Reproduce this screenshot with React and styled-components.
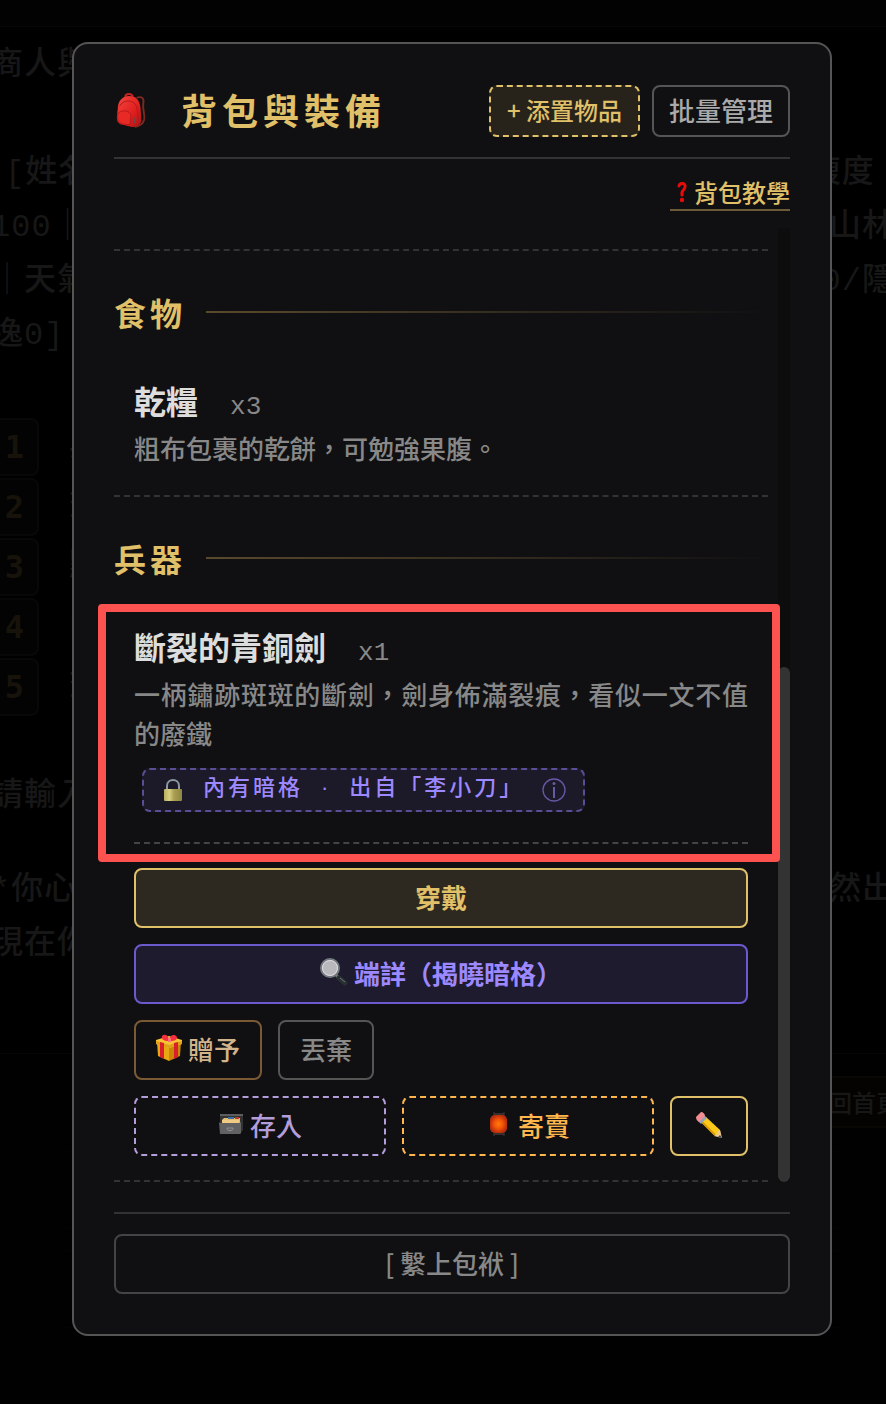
import React from 'react';
import styled, { createGlobalStyle, css } from 'styled-components';

const gold = '#e0c068';
const sans = '"Noto Sans CJK TC", sans-serif';
const mono = '"Liberation Mono", "Noto Sans CJK TC", monospace';

const GlobalStyle = createGlobalStyle`
	* {
		box-sizing: border-box;
	}
	body {
		margin: 0;
		background: #000;
		color: #888;
		font-family: ${sans};
		font-weight: 500;
	}
	h1, h2, h3, p, ul, ol {
		margin: 0;
		padding: 0;
		list-style: none;
	}
`;

// Game screen and modal share one grid cell
const Stage = styled.div`
	display: grid;
	grid-template-columns: minmax(0, 1fr);
	min-height: 100vh;
	& > * {
		grid-area: 1 / 1;
	}
`;

/* ---------- dimmed game screen ---------- */

const Game = styled.div`
	display: flex;
	flex-direction: column;
	min-width: 0;
	overflow: hidden;
	color: #171717;
	font-family: ${mono};
	font-size: 32px;
	letter-spacing: 1px;
	line-height: 54px;
	white-space: pre;
`;

const GameBar = styled.div`
	flex: none;
	height: 27px;
	background: #020202;
	border-bottom: 1px solid #070707;
`;

const Story = styled.div`
	margin: ${p => p.$top}px -9px 0;
`;

const StoryLine = styled.p`
	display: flex;
	justify-content: space-between;
	padding-left: ${p => (p.$indent ? '14px' : '0')};
`;

const Choices = styled.ol`
	display: flex;
	flex-direction: column;
	gap: 2px;
	margin: 55px 0 0 -8px;
`;

const Choice = styled.li`
	display: flex;
	align-items: center;
	gap: 30px;
	height: 58px;
`;

const ChoiceKey = styled.span`
	width: 47px;
	height: 58px;
	padding-right: 12px;
	border: 2px solid #080808;
	border-radius: 8px;
	background: #030303;
	color: #17130a;
	font-family: "DejaVu Sans Mono", monospace;
	font-weight: 700;
	text-align: right;
`;

const GameFooter = styled.div`
	display: flex;
	flex-direction: column;
	flex: 1;
	margin-top: 81px;
	padding-top: 22px;
	border-top: 1px solid #060606;
	background: #010101;
`;

const HomeLabel = styled.span`
	align-self: flex-end;
	margin-right: -20px;
	padding: 0 4px 0 24px;
	border: 2px solid #0a0804;
	background: #040301;
	font-family: ${sans};
	font-size: 24px;
	letter-spacing: 0;
	line-height: 48px;
`;

const GhostPanel = styled.div`
	height: 78px;
	margin: 22px 34px 0 52px;
	border: 1px solid #030303;
	border-radius: 12px;
`;

/* ---------- modal ---------- */

const ModalArea = styled.div`
	position: relative;
	padding: 42px 54px 68px 72px;
`;

const Modal = styled.section`
	padding: 40px;
	border: 2px solid #555;
	border-radius: 16px;
	background: #101012;
`;

const Header = styled.header`
	display: flex;
	align-items: center;
	min-height: 75px;
	padding-bottom: 19px;
	border-bottom: 2px solid #333;
`;

const Title = styled.h1`
	display: flex;
	flex: 1;
	align-items: center;
	gap: 33px;
	color: ${gold};
	font-size: 36px;
	font-weight: 700;
	letter-spacing: 5px;
	line-height: 50px;
	white-space: nowrap;
`;

const TitleText = styled.span`
	padding-bottom: 4px;
`;

const HeaderActions = styled.div`
	display: flex;
	gap: 12px;
`;

const HeaderButton = styled.button`
	height: 52px;
	padding: 0 15px 4px;
	border: 2px solid #555;
	border-radius: 8px;
	background: transparent;
	color: #aaa;
	font-family: ${sans};
	font-size: 26px;
	font-weight: 500;
	white-space: nowrap;
	cursor: pointer;
	${p => p.$add && css`
		padding: 0 16px 4px;
		border: 2px dashed ${gold};
		background: #27231b;
		color: ${gold};
		font-size: 24px;
	`}
`;

const HelpRow = styled.div`
	display: flex;
	justify-content: flex-end;
	padding: 18px 0 17px;
`;

const HelpLink = styled.a`
	display: flex;
	align-items: center;
	padding-bottom: 2px;
	border-bottom: 2px solid #6b5a38;
	color: ${gold};
	font-size: 24px;
	line-height: 30px;
	text-decoration: none;
`;

const ScrollArea = styled.div`
	display: flex;
	gap: 10px;
`;

const List = styled.div`
	flex: 1;
	min-width: 0;
	padding-top: 21px;
`;

const ScrollTrack = styled.div`
	display: flex;
	flex: none;
	align-items: flex-end;
	width: 12px;
	background: #0d0d0d;
`;

const ScrollThumb = styled.div`
	width: 100%;
	height: 54%;
	border-radius: 6px;
	background: #333;
`;

const Divider = styled.hr`
	height: 0;
	margin: 0;
	border: 0;
	border-top: 2px dashed ${p => (p.$inner ? '#444' : '#333')};
`;

const SectionTitle = styled.h2`
	display: flex;
	align-items: center;
	gap: 20px;
	margin: 38px 0 44px;
	color: ${gold};
	font-size: 32px;
	font-weight: 700;
	letter-spacing: 4px;
	line-height: 46px;
	&::after {
		content: '';
		flex: 1;
		height: 2px;
		background: linear-gradient(to right, #5a4a2c, transparent);
	}
`;

const Item = styled.article`
	padding: 0 20px 24px;
`;

const ItemInfo = styled.div`
	position: relative;
`;

// Red frame round the item being pointed out
const Highlight = styled.div`
	position: absolute;
	inset: -21px -32px -18px -36px;
	border: 8px solid #fc5250;
	border-radius: 4px;
	pointer-events: none;
`;

const ItemHead = styled.div`
	display: flex;
	align-items: baseline;
	gap: 32px;
	height: 49px;
	line-height: 42px;
`;

const ItemName = styled.h3`
	color: #ddd;
	font-size: 32px;
	font-weight: 700;
`;

const ItemCount = styled.span`
	color: #888;
	font-family: "Courier New", ${mono};
	font-size: 26px;
	font-weight: 400;
`;

const ItemDesc = styled.p`
	margin-bottom: 4px;
	color: #888;
	font-size: 26px;
	line-height: 39px;
	text-align: justify;
`;

const SecretTag = styled.div`
	display: inline-flex;
	align-items: center;
	gap: 18px;
	height: 44px;
	margin: 12px 0 30px 8px;
	padding: 0 17px;
	border: 2px dashed #5c4e96;
	border-radius: 8px;
	background: #1c1928;
	color: #9c88ff;
	font-size: 22px;
	letter-spacing: 3px;
	line-height: 30px;
	vertical-align: top;
	white-space: nowrap;
`;

const TagText = styled.span`
	padding-bottom: 4px;
	font-family: "Liberation Sans", ${sans};
`;

const Actions = styled.div`
	display: flex;
	flex-direction: column;
	gap: 16px;
	padding-top: 24px;
`;

const ActionRow = styled.div`
	display: flex;
	gap: 16px;
`;

const tones = {
	equip: css`
		border-color: ${gold};
		background: #2d2820;
		color: ${gold};
		font-weight: 700;
	`,
	reveal: css`
		border-color: #6a5acd;
		background: #1e1b2e;
		color: #9c88ff;
		font-weight: 700;
	`,
	gift: css`
		border-color: #7a5a35;
		color: #d2b48c;
	`,
	discard: css`
		border-color: #555;
		color: #888;
	`,
	store: css`
		border: 2px dashed #b39ddb;
		color: #b39ddb;
	`,
	sell: css`
		border: 2px dashed #ffb74d;
		color: #ffb74d;
	`,
	edit: css`
		padding: 0 24px 2px;
		border-color: ${gold};
	`,
	close: css`
		width: 100%;
		border-color: #444;
		color: #888;
	`,
};

const Button = styled.button`
	display: flex;
	align-items: center;
	justify-content: center;
	gap: 6px;
	flex: ${p => (p.$grow ? '1' : 'none')};
	height: 60px;
	padding: 0 20px 4px;
	border: 2px solid;
	border-radius: 8px;
	background: transparent;
	font-family: ${sans};
	font-size: 26px;
	font-weight: 500;
	white-space: nowrap;
	cursor: pointer;
	${p => tones[p.$tone]}
`;

const Footer = styled.footer`
	margin-top: 30px;
	padding-top: 20px;
	border-top: 2px solid #333;
`;

/* ---------- icons ---------- */

const Svg = styled.svg`
	display: block;
	flex: none;
`;

const BackpackIcon = () => (
	<Svg width="34" height="36" viewBox="0 0 36 38" aria-hidden="true">
		<defs>
			<linearGradient id="bag" x1="0" y1="0" x2="1" y2="1">
				<stop offset="0" stopColor="#f5473f" />
				<stop offset=".6" stopColor="#e01f1f" />
				<stop offset="1" stopColor="#a81414" />
			</linearGradient>
		</defs>
		<path d="M24 5c6-2 8 1 7 6 -1 6 2 12 1 17 -1 4-5 7-10 8" fill="none" stroke="#7a2a22" strokeWidth="2" />
		<path d="M12 4c0-4 7-4 8 0" fill="none" stroke="#c92020" strokeWidth="2" />
		<path d="M4 17C4 8 9 3 16 3c8 0 11 5 12 12l1 13c0 5-4 8-10 8L7 33c-3-1-4-4-4-7z" fill="url(#bag)" />
		<path d="M6 14c3-7 14-8 18 0l2 14" fill="none" stroke="#b01818" strokeWidth="1" />
		<path d="M4 22c4-5 13-4 14 2l-1 9c-4 1-9 0-11-2-2-2-3-5-2-9z" fill="#e82a27" stroke="#b51818" strokeWidth="1" />
		<path d="M22 26v6" stroke="#555" strokeWidth="1" />
	</Svg>
);

const QuestionIcon = () => (
	<Svg width="24" height="24" viewBox="0 0 24 24" aria-hidden="true">
		<path d="M9 6c1-4 7-3 6 1 0 3-4 3-3 8" fill="none" stroke="#e80b0b" strokeWidth="3" strokeLinecap="round" />
		<circle cx="12" cy="20" r="2.2" fill="#e80b0b" />
	</Svg>
);

const LockIcon = () => (
	<Svg width="24" height="24" viewBox="0 0 24 24" aria-hidden="true">
		<defs>
			<linearGradient id="brass">
				<stop offset="0" stopColor="#b9af61" />
				<stop offset=".3" stopColor="#d8d080" />
				<stop offset=".55" stopColor="#aaa052" />
				<stop offset="1" stopColor="#8e8444" />
			</linearGradient>
		</defs>
		<path d="M6 12V8c0-8 12-8 12 0v4" fill="none" stroke="#8b99a3" strokeWidth="2" />
		<rect x="3" y="11" width="18" height="12" rx="1" fill="url(#brass)" />
	</Svg>
);

const InfoIcon = () => (
	<Svg width="24" height="24" viewBox="0 0 24 24" fill="none" stroke="#6759a6" strokeWidth="1.3" aria-hidden="true">
		<circle cx="12" cy="12" r="11" />
		<path d="M12 9v11" strokeWidth="2" />
		<circle cx="12" cy="5.5" r="1.5" fill="#6759a6" stroke="none" />
	</Svg>
);

const MagnifierIcon = () => (
	<Svg width="28" height="28" viewBox="0 0 28 28" aria-hidden="true">
		<path d="M16 17l4 4" stroke="#777" strokeWidth="3" />
		<path d="M19 20l6 5" stroke="#283032" strokeWidth="5" strokeLinecap="round" />
		<path d="M20 20l5 4" stroke="#6b777b" strokeWidth="1" />
		<circle cx="10" cy="10" r="9" fill="#b9b9bd" stroke="#747b80" strokeWidth="2" />
		<circle cx="10" cy="10" r="7.5" fill="none" stroke="#dcdce0" strokeWidth="1" />
	</Svg>
);

const GiftIcon = () => (
	<Svg width="26" height="28" viewBox="0 0 26 28" aria-hidden="true">
		<path d="M1 8l12 4v15L2 22z" fill="#e8a811" />
		<path d="M25 8l-12 4v15l11-5z" fill="#c98708" />
		<path d="M0 6l13-4 13 4v4l-13 4L0 10z" fill="#f7c332" />
		<path d="M0 7l13 4 13-4v3l-13 4L0 10z" fill="#dda016" />
		<path d="M4 8l4 1v16l-4-2zM18 9l4-1v15l-4 2z" fill="#d81f2b" />
		<path d="M13 7C9 7 5 6 6 2c3-3 6 0 7 3 1-3 5-6 8-2 0 4-4 4-8 4z" fill="#f4303e" />
		<path d="M12 4h3v4h-3z" fill="#ff7179" />
	</Svg>
);

const BoxIcon = () => (
	<Svg width="26" height="22" viewBox="0 0 26 22" aria-hidden="true">
		<path d="M2 1h23v16l-3 4H2z" fill="#333" />
		<path d="M2 1h23v2H2z" fill="#5b5d5e" />
		<path d="M4 7l2-2h16v5H4z" fill="#e4bd70" />
		<path d="M10 4h6v2h-6z" fill="#346da9" />
		<path d="M17 4h4v2h-4z" fill="#b53c30" />
		<path d="M4 7h17v3H4z" fill="#efcb83" />
		<path d="M1 9l1 1h19l2-1v11l-1 1H2z" fill="#606263" />
		<path d="M9 16c0 2 6 2 6 0v-1H9z" fill="none" stroke="#909090" strokeWidth="1" />
	</Svg>
);

const LanternIcon = () => (
	<Svg width="26" height="26" viewBox="0 0 26 26" aria-hidden="true">
		<defs>
			<radialGradient id="glow">
				<stop offset="0" stopColor="#ff7b0a" />
				<stop offset=".5" stopColor="#f45508" />
				<stop offset="1" stopColor="#b92c0c" />
			</radialGradient>
		</defs>
		<path d="M8 1v24M18 1v24" stroke="#433d38" />
		<path d="M8 2h10v3H8zM8 21h10v3H8z" fill="#35302c" />
		<rect x="4" y="4" width="17" height="18" rx="5" fill="url(#glow)" />
	</Svg>
);

const PencilIcon = () => (
	<Svg width="26" height="26" viewBox="0 0 26 26" aria-hidden="true">
		<path d="M10 5l14 13 1 7-7-2L5 10z" fill="#fdc918" />
		<path d="M6 10l13 13" stroke="#d99a08" strokeWidth="2" />
		<path d="M24 18l2 8-8-2 3-2 1-3z" fill="#ecc893" />
		<path d="M24 23l2 3-4-1z" fill="#444" />
		<path d="M8 3l3 3-6 6-3-3z" fill="#93a3b4" />
		<path d="M5 0c2 0 4 2 4 4L3 10C1 9 0 7 0 5z" fill="#f18d92" />
	</Svg>
);

const story = [
	['商人與', ''],
	['', ''],
	['[姓名', '腹度 '],
	['100｜', '山林'],
	['｜天氣', '0/隱'],
	['逸0]', ''],
];

const choices = ['與', '查', '點', '向', '查'];

const GameScreen = () => (
	<Game aria-hidden="true">
		<GameBar />
		<Story $top={12}>
			{story.map(([left, right], i) => (
				<StoryLine key={i} $indent={left.startsWith('[')}>
					<span>{left || ' '}</span>
					<span>{right}</span>
				</StoryLine>
			))}
		</Story>
		<Choices>
			{choices.map((text, i) => (
				<Choice key={i}>
					<ChoiceKey>{i + 1}</ChoiceKey>
					<span>{text}</span>
				</Choice>
			))}
		</Choices>
		<Story $top={54}>
			<StoryLine>請輸入</StoryLine>
		</Story>
		<Story $top={40}>
			<StoryLine>
				<span>*你心</span>
				<span>然出</span>
			</StoryLine>
			<StoryLine>現在你</StoryLine>
		</Story>
		<GameFooter>
			<HomeLabel>返回首頁</HomeLabel>
			<GhostPanel />
			<GhostPanel />
		</GameFooter>
	</Game>
);

const ItemTitle = ({ name, count }) => (
	<ItemHead>
		<ItemName>{name}</ItemName>
		<ItemCount>x{count}</ItemCount>
	</ItemHead>
);

const App = () => (
	<>
		<GlobalStyle />
		<Stage>
			<GameScreen />
			<ModalArea>
				<Modal role="dialog" aria-labelledby="bag-title">
					<Header>
						<Title id="bag-title">
							<BackpackIcon />
							<TitleText>背包與裝備</TitleText>
						</Title>
						<HeaderActions>
							<HeaderButton type="button" $add>+ 添置物品</HeaderButton>
							<HeaderButton type="button">批量管理</HeaderButton>
						</HeaderActions>
					</Header>
					<HelpRow>
						<HelpLink href="#help">
							<QuestionIcon />
							背包教學
						</HelpLink>
					</HelpRow>

					<ScrollArea>
						<List>
							<Divider />
							<SectionTitle>食物</SectionTitle>
							<Item>
								<ItemTitle name="乾糧" count={3} />
								<ItemDesc>粗布包裹的乾餅，可勉強果腹。</ItemDesc>
							</Item>
							<Divider />

							<SectionTitle>兵器</SectionTitle>
							<Item>
								<ItemInfo>
									<ItemTitle name="斷裂的青銅劍" count={1} />
									<ItemDesc>一柄鏽跡斑斑的斷劍，劍身佈滿裂痕，看似一文不值的廢鐵</ItemDesc>
									<SecretTag>
										<LockIcon />
										<TagText>內有暗格</TagText>
										<TagText>·</TagText>
										<TagText>出自「李小刀」</TagText>
										<InfoIcon />
									</SecretTag>
									<Divider $inner />
									<Highlight />
								</ItemInfo>
								<Actions>
									<Button type="button" $tone="equip">穿戴</Button>
									<Button type="button" $tone="reveal">
										<MagnifierIcon />
										端詳（揭曉暗格）
									</Button>
									<ActionRow>
										<Button type="button" $tone="gift">
											<GiftIcon />
											贈予
										</Button>
										<Button type="button" $tone="discard">丟棄</Button>
									</ActionRow>
									<ActionRow>
										<Button type="button" $tone="store" $grow>
											<BoxIcon />
											存入
										</Button>
										<Button type="button" $tone="sell" $grow>
											<LanternIcon />
											寄賣
										</Button>
										<Button type="button" $tone="edit" aria-label="編輯">
											<PencilIcon />
										</Button>
									</ActionRow>
								</Actions>
							</Item>
							<Divider />
						</List>
						<ScrollTrack>
							<ScrollThumb />
						</ScrollTrack>
					</ScrollArea>

					<Footer>
						<Button type="button" $tone="close">[ 繫上包袱 ]</Button>
					</Footer>
				</Modal>
			</ModalArea>
		</Stage>
	</>
);

export default App;
